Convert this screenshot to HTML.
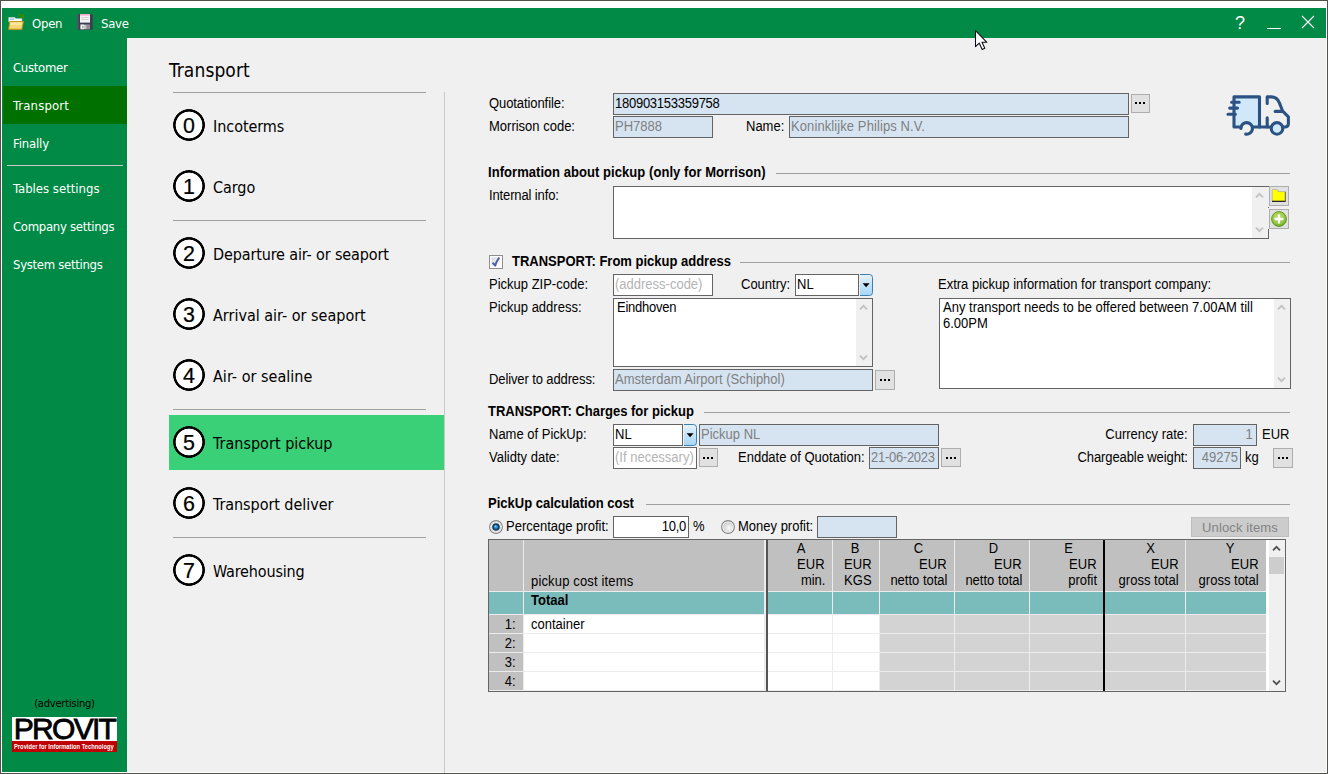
<!DOCTYPE html>
<html lang="en">
<head>
<meta charset="utf-8">
<title>Transport</title>
<style>
*{box-sizing:border-box;margin:0;padding:0}
html,body{width:1328px;height:774px;overflow:hidden;background:#f0f0f0}
body{position:relative;font-family:"Liberation Sans",Arial,sans-serif;font-size:13px;color:#000}
#win{position:absolute;left:0;top:0;width:1328px;height:774px;background:#fff;overflow:hidden}
#win div,#win span,#win b,#win svg,#win i{position:absolute}
#win span,#win b{white-space:nowrap;line-height:16px}
.frame{left:0;top:0;width:1328px;height:774px;border:1px solid #50524a;z-index:50;pointer-events:none}
#titlebar{left:2px;top:8px;width:1324px;height:30px;background:#008a45}
#side{left:2px;top:38px;width:125px;height:734px;background:#008a45}
#main{left:127px;top:38px;width:1199px;height:734px;background:#f0f0f0}
.th{font-family:"DejaVu Sans Condensed","Liberation Sans",sans-serif}
.tb{color:#fff;font-size:13px;top:8px;letter-spacing:-.25px}
.sb{color:#fff;font-size:13px;left:11px;letter-spacing:-.3px}
#sel{left:1px;top:48px;width:124px;height:38px;background:#007000}
/* everything below positioned in page coordinates inside #pg */
#pg{left:0;top:0;width:1328px;height:774px}
.hr{height:1px;background:#a0a0a0}
.nav{font-size:16px;left:213px;letter-spacing:-.05px;line-height:20px!important;margin-top:2px}
.circ{left:173px;width:32px;height:32px;border-radius:50%;background:radial-gradient(circle closest-side,#fff 0,#fff 13px,#000 13.7px,#000 15.7px,rgba(0,0,0,0) 16.3px)}
.circ span{left:0;top:0;width:32px;height:32px;line-height:34px!important;text-align:center;font-size:23px;transform:scale(.93,.94);-webkit-text-stroke:.25px #000;font-family:"Liberation Sans",sans-serif}
.l{font-size:14px;margin-top:1px;transform:translateY(-.8px) scaleX(.9286);transform-origin:0 50%}
.l.r{transform-origin:100% 50%}
.l.c{transform-origin:50% 50%}
.fld{border:1px solid #646464;background:#d6e4f2;height:22px;overflow:hidden}
.fld span{left:1px;top:2px;font-size:14px;transform:translateY(-.8px) scaleX(.9286);transform-origin:0 50%}
.w{background:#fff}
.g{color:#808080}
.ph{color:#b4b4b4}
.btn{border:1px solid #adadad;background:#e1e1e1}
.btn i{top:7px;width:2px;height:2px;background:#000}
.btn i:nth-child(1){left:3px}.btn i:nth-child(2){left:7px}.btn i:nth-child(3){left:11px}
.b20 i{top:8px}.b20 i:nth-child(1){left:4px}.b20 i:nth-child(2){left:8px}.b20 i:nth-child(3){left:12px}
.b19 i{top:8px}
.sec{height:1px;background:#a0a0a0}
.hs{left:489px;width:777px;height:1px;background:#ececec}
.vs{top:540px;width:1px;height:151px;background:#ececec}
.c{text-align:center}
.r{text-align:right}
</style>
</head>
<body>
<div id="win">
  <div id="titlebar">
    <span class="tb th" style="left:30px">Open</span>
    <span class="tb th" style="left:99px">Save</span>
    <svg style="left:6px;top:6px" width="16" height="16" viewBox="0 0 16 16">
      <path d="M10 .7h2.4l2.8 2.6" fill="none" stroke="#3e8a00" stroke-width="1.3"/><path d="M12 3.6h3.4V.2" fill="none" stroke="#3e8a00" stroke-width="1.3"/>
      <path d="M0.8 3.6h6l1 1.2h6v3H0.8z" fill="#fdfdfd" stroke="#e4e4e4" stroke-width=".6"/>
      <rect x="1.8" y="4.6" width="4.6" height="1" fill="#6fa8e8"/>
      <path d="M1.8 7.5h13.6l-1.6 7.8H0.7z" fill="#f7d772" stroke="#c59420" stroke-width="1"/>
      <path d="M2.6 8.4h11.6l-.5 2.6H2.2z" fill="#fbe9a4" opacity=".8"/>
    </svg>
    <svg style="left:75px;top:6px" width="16" height="16" viewBox="0 0 16 16">
      <rect x="0.3" y="0.3" width="15.4" height="15.4" rx="1.2" fill="#3d3d52"/>
      <rect x="0.3" y="0.3" width="1.2" height="15.4" fill="#5a5a70"/>
      <rect x="3" y="0" width="10" height="8.6" fill="#f4f4f6"/>
      <rect x="3" y="0" width="10" height="1.6" fill="#f0a8c8"/>
      <rect x="4.2" y="3.2" width="7.6" height=".8" fill="#c8c8cc"/><rect x="4.2" y="5.2" width="7.6" height=".8" fill="#c8c8cc"/>
      <rect x="3.6" y="10.6" width="9" height="4.6" fill="#c6c6c6"/>
      <rect x="3.6" y="10.6" width="3.4" height="4.6" fill="#f6f6f6"/>
      <rect x="5.2" y="11.6" width="1.3" height="2.8" fill="#9a9aa2"/>
      <rect x="9.4" y="11" width="2.6" height="4" fill="#8c8c8c"/>
    </svg>
    <span style="left:1233px;top:4.6px;font-size:18px;line-height:20px;color:#fff;font-family:'Liberation Sans',sans-serif">?</span>
    <div style="left:1265px;top:19.6px;width:14px;height:1.5px;background:#fff"></div>
    <svg style="left:1299px;top:7px" width="14" height="14" viewBox="0 0 14 14"><path d="M1 1l12 12M13 1L1 13" stroke="#fff" stroke-width="1.1" fill="none"/></svg>

  </div>
  <div id="side">
    <div id="sel"></div>
    <span class="sb th" style="top:22px">Customer</span>
    <span class="sb th" style="top:60px;letter-spacing:.14px">Transport</span>
    <span class="sb th" style="top:98px;letter-spacing:-.15px">Finally</span>
    <div style="left:5px;top:127px;width:116px;height:1px;background:#c8c8c8"></div>
    <span class="sb th" style="top:143px;letter-spacing:0">Tables settings</span>
    <span class="sb th" style="top:181px">Company settings</span>
    <span class="sb th" style="top:219px">System settings</span>
    <span class="th" style="left:0;width:125px;text-align:center;top:659px;font-size:11px;line-height:14px;color:#000;letter-spacing:-.2px">(advertising)</span>
    <div style="left:10px;top:679px;width:105px;height:24px;background:#fff"></div>
    <span id="provit" style="left:10px;top:676px;width:105px;text-align:center;font-size:30px;line-height:30px;letter-spacing:-1.7px;-webkit-text-stroke:.8px #000">PROVIT</span>
    <div style="left:10px;top:703px;width:105px;height:11px;background:#c00000"></div>
    <b style="left:12px;top:704px;font-size:7px;line-height:9px;color:#fff;transform:scaleX(.825);transform-origin:0 0">Provider for Information Technology</b>

  </div>
  <div id="main"></div>
  <div id="pg">
    <!-- NAV -->
    <span class="th" id="h1" style="left:169px;top:58px;font-size:19px;line-height:24px;letter-spacing:.1px">Transport</span>
    <div class="hr" style="left:173px;top:92px;width:253px"></div>
    <div style="left:444px;top:92px;width:1px;height:682px;background:#c8c8c8"></div>
    <div style="left:169px;top:415px;width:275px;height:55px;background:#39d077"></div>

    <div class="circ" style="top:109px"><span>0</span></div><span class="nav th" style="top:115px">Incoterms</span>
    <div class="circ" style="top:170px"><span>1</span></div><span class="nav th" style="top:176px">Cargo</span>
    <div class="hr" style="left:173px;top:220px;width:253px"></div>
    <div class="circ" style="top:237px"><span>2</span></div><span class="nav th" style="top:243px;letter-spacing:-.13px">Departure air- or seaport</span>
    <div class="circ" style="top:298px"><span>3</span></div><span class="nav th" style="top:304px;letter-spacing:0">Arrival air- or seaport</span>
    <div class="circ" style="top:359px"><span>4</span></div><span class="nav th" style="top:365px;letter-spacing:.03px">Air- or sealine</span>
    <div class="hr" style="left:173px;top:409px;width:253px"></div>
    <div class="circ" style="top:426px"><span>5</span></div><span class="nav th" style="top:432px;letter-spacing:.03px">Transport pickup</span>
    <div class="circ" style="top:487px"><span>6</span></div><span class="nav th" style="top:493px">Transport deliver</span>
    <div class="hr" style="left:173px;top:537px;width:253px"></div>
    <div class="circ" style="top:554px"><span>7</span></div><span class="nav th" style="top:560px;letter-spacing:-.16px">Warehousing</span>


    <svg id="truck" style="left:1222px;top:90px" width="72" height="50" viewBox="1222 90 72 50">
      <rect x="1234" y="96.9" width="25.5" height="30.1" fill="#d1e8fb"/>
      <circle cx="1246.7" cy="128.4" r="5.8" fill="#f0f0f0"/><circle cx="1277" cy="128.4" r="5.8" fill="#d1e8fb"/>
      <g fill="none" stroke="#2b5282" stroke-width="3.1" stroke-linecap="round" stroke-linejoin="round">
        <path d="M1240.9 127H1234V96.9h25.5V127"/>
        <path d="M1252.5 127H1271.2"/>
        <path d="M1231.6 102.2h7.6M1229.7 108.1h7.8M1228 114.3h7.4"/>
        <path d="M1240.9 128.4a5.8 5.8 0 1 1 4.8 5.7"/>
        <circle cx="1277" cy="128.4" r="5.8"/>
        <path d="M1267.2 103.4V96.9h4c4.5 0 6.8 2.4 8.2 6l3.3 8.3 5.7 5.6v6.6c0 2.4-1.4 3.6-3.6 3.6h-2.4"/>
        <path d="M1267.2 117.8V127"/>
        <path d="M1275.2 111.4h7.4"/>
      </g>
    </svg>
    <!-- FORM -->
    <span class="l" style="left:489px;top:95px;letter-spacing:-.09px">Quotationfile:</span>
    <div class="fld" style="left:613px;top:93px;width:516px"><span style="letter-spacing:-.28px">180903153359758</span></div>
    <div class="btn" style="left:1131px;top:94px;width:19px;height:19px"><i></i><i></i><i></i></div>
    <span class="l" style="left:489px;top:118px">Morrison code:</span>
    <div class="fld" style="left:613px;top:116px;width:100px"><span class="g">PH7888</span></div>
    <span class="l" style="left:746px;top:118px">Name:</span>
    <div class="fld" style="left:789px;top:116px;width:340px"><span class="g" style="letter-spacing:.1px">Koninklijke Philips N.V.</span></div>

    <b class="l" style="left:488px;top:164px;letter-spacing:.06px">Information about pickup (only for Morrison)</b>
    <div class="sec" style="left:776px;top:173px;width:514px"></div>
    <span class="l" style="left:489px;top:187px;letter-spacing:-.14px">Internal info:</span>
    <div class="fld w" style="left:613px;top:186px;width:656px;height:53px"></div>
        
    <b class="l" style="left:512px;top:253px">TRANSPORT: From pickup address</b>
    <div class="sec" style="left:740px;top:262px;width:550px"></div>
    <span class="l" style="left:489px;top:276px">Pickup ZIP-code:</span>
    <div class="fld w" style="left:613px;top:274px;width:100px"><span class="ph">(address-code)</span></div>
    <span class="l" style="left:741px;top:276px">Country:</span>
    <div class="fld w" style="left:795px;top:274px;width:64px"><span style="left:1px">NL</span></div>
    <span class="l" style="left:938px;top:276px">Extra pickup information for transport company:</span>
    <span class="l" style="left:489px;top:299px">Pickup address:</span>
    <div class="fld w" style="left:613px;top:298px;width:260px;height:69px"><span style="left:3px;top:1px;letter-spacing:-.25px">Eindhoven</span></div>
    <div class="fld w" style="left:939px;top:298px;width:352px;height:91px"><span style="left:3px;top:1px">Any transport needs to be offered between 7.00AM till</span><span style="left:3px;top:17px">6.00PM</span></div>
    <span class="l" style="left:489px;top:371px;letter-spacing:-.12px">Deliver to address:</span>
    <div class="fld" style="left:613px;top:369px;width:260px"><span class="g">Amsterdam Airport (Schiphol)</span></div>
    <div class="btn b20" style="left:875px;top:370px;width:20px;height:20px"><i></i><i></i><i></i></div>

    <b class="l" style="left:488px;top:403px">TRANSPORT: Charges for pickup</b>
    <div class="sec" style="left:704px;top:412px;width:586px"></div>
    <span class="l" style="left:489px;top:426px">Name of PickUp:</span>
    <div class="fld w" style="left:613px;top:424px;width:70px"><span style="left:1px">NL</span></div>
    <div class="fld" style="left:699px;top:424px;width:240px"><span class="g">Pickup NL</span></div>
    <span class="l r" style="right:140px;top:426px">Currency rate:</span>
    <div class="fld" style="left:1193px;top:424px;width:64px"><span class="g" style="left:auto;right:3px;transform-origin:100% 50%">1</span></div>
    <span class="l" style="left:1262px;top:426px">EUR</span>
    <span class="l" style="left:489px;top:449px">Validty date:</span>
    <div class="fld w" style="left:613px;top:447px;width:84px"><span class="ph">(If necessary)</span></div>
    <div class="btn b19" style="left:699px;top:448px;width:19px;height:19px"><i></i><i></i><i></i></div>
    <span class="l" style="left:738px;top:449px">Enddate of Quotation:</span>
    <div class="fld" style="left:869px;top:447px;width:70px"><span class="g" style="letter-spacing:-.3px">21-06-2023</span></div>
    <div class="btn b20" style="left:941px;top:448px;width:20px;height:19px"><i></i><i></i><i></i></div>
    <span class="l r" style="right:140px;top:449px;letter-spacing:-.1px">Chargeable weight:</span>
    <div class="fld" style="left:1193px;top:447px;width:48px"><span class="g" style="left:auto;right:2px;transform-origin:100% 50%">49275</span></div>
    <span class="l" style="left:1245px;top:449px">kg</span>
    <div class="btn b20" style="left:1273px;top:448px;width:20px;height:20px"><i></i><i></i><i></i></div>

    <b class="l" style="left:488px;top:495px">PickUp calculation cost</b>
    <div class="sec" style="left:646px;top:504px;width:644px"></div>
    <span class="l" style="left:506px;top:518px">Percentage profit:</span>
    <div class="fld w" style="left:613px;top:516px;width:76px"><span style="left:auto;right:2px;transform-origin:100% 50%;letter-spacing:-.3px">10,0</span></div>
    <span class="l" style="left:693px;top:518px">%</span>
    <span class="l" style="left:738px;top:518px">Money profit:</span>
    <div class="fld" style="left:817px;top:516px;width:80px"></div>
    <div class="btn" style="left:1191px;top:517px;width:98px;height:20px;background:#cccccc;border-color:#bfbfbf"><span class="g" style="left:0;width:96px;text-align:center;top:2px;color:#838383;letter-spacing:.12px;transform-origin:50% 50%">Unlock items</span></div>


    <!-- folder / plus buttons -->
    <div style="left:1268px;top:187px;width:1px;height:42px;background:#f0f0f0"></div><div style="left:1268px;top:207px;width:1px;height:1px;background:#646464"></div>
    <svg style="left:1269px;top:186px" width="20" height="20" viewBox="0 0 20 20"><rect x=".5" y=".5" width="19" height="19" fill="#e1e1e1" stroke="#adadad"/>
      <path d="M3.2 5.6V4.4q0-.9.9-.9h3.6q.9 0 1.1.9l.3 1.2h7.1v9.6H3.2z" fill="#ffff00" stroke="#9a9ab0" stroke-width=".6"/>
      <path d="M3 15.3h13.6" stroke="#000" stroke-width="1"/><path d="M16.4 5.8v9.6" stroke="#555" stroke-width=".8"/></svg>
    <svg style="left:1269px;top:209px" width="20" height="20" viewBox="0 0 20 20"><defs><radialGradient id="gp" cx=".45" cy=".35" r=".7"><stop offset="0" stop-color="#c6e070"/><stop offset=".7" stop-color="#8cc43c"/><stop offset="1" stop-color="#5c9a1c"/></radialGradient></defs>
      <rect x=".5" y=".5" width="19" height="19" fill="#e1e1e1" stroke="#adadad"/>
      <circle cx="10" cy="10" r="7.4" fill="url(#gp)" stroke="#5a9416" stroke-width=".9"/>
      <path d="M10 5.6v8.8M5.6 10h8.8" stroke="#fff" stroke-width="2.3"/></svg>
    <!-- scroll arrows -->
    <div style="left:1252px;top:187px;width:16px;height:51px;background:#f0f0f0"></div>
    <svg class="chev" style="left:1255px;top:192px" width="9" height="7" viewBox="0 0 9 7"><path d="M1 5.4L4.5 1.8 8 5.4" fill="none" stroke="#c2c2c2" stroke-width="1.9"/></svg>
    <svg class="chev" style="left:1255px;top:226px" width="9" height="7" viewBox="0 0 9 7"><path d="M1 1.6L4.5 5.2 8 1.6" fill="none" stroke="#c2c2c2" stroke-width="1.9"/></svg>
    <div style="left:856px;top:299px;width:16px;height:67px;background:#f0f0f0"></div>
    <svg class="chev" style="left:859px;top:304px" width="9" height="7" viewBox="0 0 9 7"><path d="M1 5.4L4.5 1.8 8 5.4" fill="none" stroke="#c2c2c2" stroke-width="1.9"/></svg>
    <svg class="chev" style="left:859px;top:354px" width="9" height="7" viewBox="0 0 9 7"><path d="M1 1.6L4.5 5.2 8 1.6" fill="none" stroke="#c2c2c2" stroke-width="1.9"/></svg>
    <div style="left:1274px;top:299px;width:16px;height:89px;background:#f0f0f0"></div>
    <svg class="chev" style="left:1277px;top:304px" width="9" height="7" viewBox="0 0 9 7"><path d="M1 5.4L4.5 1.8 8 5.4" fill="none" stroke="#c2c2c2" stroke-width="1.9"/></svg>
    <svg class="chev" style="left:1277px;top:376px" width="9" height="7" viewBox="0 0 9 7"><path d="M1 1.6L4.5 5.2 8 1.6" fill="none" stroke="#c2c2c2" stroke-width="1.9"/></svg>
    <!-- checkbox -->
    <svg style="left:489px;top:255px" width="14" height="14" viewBox="0 0 14 14"><defs><linearGradient id="gc" x1="0" y1="0" x2="1" y2="1"><stop offset="0" stop-color="#d2d4dc"/><stop offset=".6" stop-color="#f4f4f6"/><stop offset="1" stop-color="#fff"/></linearGradient></defs>
      <rect x=".5" y=".5" width="13" height="13" fill="#fff" stroke="#8e8f8f"/><rect x="2.5" y="2.5" width="9" height="9" fill="url(#gc)"/>
      <path d="M3.6 7.6l2.6 3 1.2-3.4 2.8-4.6" fill="none" stroke="#4a5fa8" stroke-width="2" stroke-linejoin="round"/></svg>
    <!-- radios -->
    <svg style="left:489px;top:520px" width="14" height="14" viewBox="0 0 14 14"><circle cx="7" cy="7" r="6.4" fill="#f4f4f4" stroke="#858686" stroke-width="1.1"/><circle cx="7" cy="7" r="4.9" fill="none" stroke="#c4c4c4" stroke-width=".9" stroke-dasharray="2 1.4"/><circle cx="7" cy="7" r="3.8" fill="#163f5c"/><circle cx="6.9" cy="6.9" r="1.9" fill="#2c9fe6"/><circle cx="6.5" cy="6.4" r=".8" fill="#7ccaf4"/></svg>
    <svg style="left:721px;top:520px" width="14" height="14" viewBox="0 0 14 14"><defs><radialGradient id="gr" cx=".6" cy=".6" r=".6"><stop offset="0" stop-color="#fafafa"/><stop offset="1" stop-color="#cfcfcf"/></radialGradient></defs><circle cx="7" cy="7" r="6.4" fill="#f4f4f4" stroke="#858686" stroke-width="1.1"/><circle cx="7" cy="7" r="4.8" fill="url(#gr)"/></svg>
    <!-- combo buttons -->
    <svg style="left:860px;top:274px" width="13" height="22" viewBox="0 0 13 22"><defs><linearGradient id="gb" x1="0" y1="0" x2="0" y2="1"><stop offset="0" stop-color="#e6f3fc"/><stop offset=".5" stop-color="#c4e4f9"/><stop offset="1" stop-color="#a6d6f7"/></linearGradient></defs>
      <path d="M0 .5h9.5q3 0 3 3v15q0 3-3 3H0" fill="url(#gb)" stroke="#3c7fb1"/><path d="M2.6 9.3h7L6.1 13.3z" fill="#000"/></svg>
    <svg style="left:684px;top:424px" width="13" height="22" viewBox="0 0 13 22">
      <path d="M0 .5h9.5q3 0 3 3v15q0 3-3 3H0" fill="url(#gb)" stroke="#3c7fb1"/><path d="M2.6 9.3h7L6.1 13.3z" fill="#000"/></svg>
    <!-- TABLE -->
    <div id="tbl" style="left:488px;top:539px;width:798px;height:153px;border:1px solid #646464;background:#fff"></div>
    <div style="left:489px;top:540px;width:777px;height:51px;background:#c0c0c0"></div>
    <div style="left:489px;top:592px;width:777px;height:22px;background:#7abcbb"></div>
    <div style="left:489px;top:615px;width:34px;height:75px;background:#c0c0c0"></div>
    <div style="left:880px;top:615px;width:386px;height:75px;background:#d3d3d3"></div>
    <div style="left:1269px;top:540px;width:16px;height:151px;background:#f0f0f0"></div>
    <div style="left:1269px;top:557px;width:15px;height:17px;background:#cdcdcd"></div>
    <div class="hs" style="top:591px"></div><div class="hs" style="top:614px"></div><div class="hs" style="top:633px"></div><div class="hs" style="top:652px"></div><div class="hs" style="top:671px"></div><div class="hs" style="top:690px"></div>
    <div class="vs" style="left:523px"></div><div class="vs" style="left:832px"></div><div class="vs" style="left:879px"></div><div class="vs" style="left:954px"></div><div class="vs" style="left:1029px"></div><div class="vs" style="left:1185px"></div>
    <div class="vs" style="left:764px;width:2px"></div>
    <div class="vs" style="left:766px;width:2px;background:#555"></div>
    <div class="vs" style="left:1103px;width:2px;background:#000"></div>
    <span class="l c" style="left:768px;width:66px;top:540px">A</span><span class="l r" style="right:503px;top:556px">EUR</span><span class="l r" style="right:503px;top:572px">min.</span>
    <span class="l c" style="left:833px;width:44px;top:540px">B</span><span class="l r" style="right:456px;top:556px">EUR</span><span class="l r" style="right:456px;top:572px">KGS</span>
    <span class="l c" style="left:880px;width:77px;top:540px">C</span><span class="l r" style="right:381px;top:556px">EUR</span><span class="l r" style="right:381px;top:572px">netto total</span>
    <span class="l c" style="left:955px;width:77px;top:540px">D</span><span class="l r" style="right:306px;top:556px">EUR</span><span class="l r" style="right:306px;top:572px">netto total</span>
    <span class="l c" style="left:1030px;width:77px;top:540px">E</span><span class="l r" style="right:231px;top:556px">EUR</span><span class="l r" style="right:231px;top:572px">profit</span>
    <span class="l c" style="left:1105px;width:91px;top:540px">X</span><span class="l r" style="right:149px;top:556px">EUR</span><span class="l r" style="right:149px;top:572px">gross total</span>
    <span class="l c" style="left:1186px;width:88px;top:540px">Y</span><span class="l r" style="right:69px;top:556px">EUR</span><span class="l r" style="right:69px;top:572px">gross total</span>
    <span class="l" style="left:531px;top:572.6px;letter-spacing:.17px">pickup cost items</span>
    <b class="l" style="left:531px;top:592px">Totaal</b>
    <span class="l r" style="right:812px;top:615.6px">1:</span><span class="l" style="left:531px;top:615.6px">container</span>
    <span class="l r" style="right:812px;top:634.6px">2:</span>
    <span class="l r" style="right:812px;top:653.6px">3:</span>
    <span class="l r" style="right:812px;top:672.6px">4:</span>
    <svg class="chev" style="left:1272px;top:545px" width="9" height="7" viewBox="0 0 9 7"><path d="M1 5.4L4.5 1.8 8 5.4" fill="none" stroke="#505050" stroke-width="1.7"/></svg>
    <svg class="chev" style="left:1272px;top:679px" width="9" height="7" viewBox="0 0 9 7"><path d="M1 1.6L4.5 5.2 8 1.6" fill="none" stroke="#505050" stroke-width="1.7"/></svg>
    <svg style="left:972px;top:27px" width="18" height="26" viewBox="972 27 18 26"><path d="M975.5 30.6V46.6L979.2 43.1 982.2 49.4 984.8 48.3 982 42.3H986.9Z" fill="#fff" stroke="#0a0a14" stroke-width="1.05" stroke-linejoin="round"/></svg>
  </div>
  <div class="frame"></div>
</div>
</body>
</html>
